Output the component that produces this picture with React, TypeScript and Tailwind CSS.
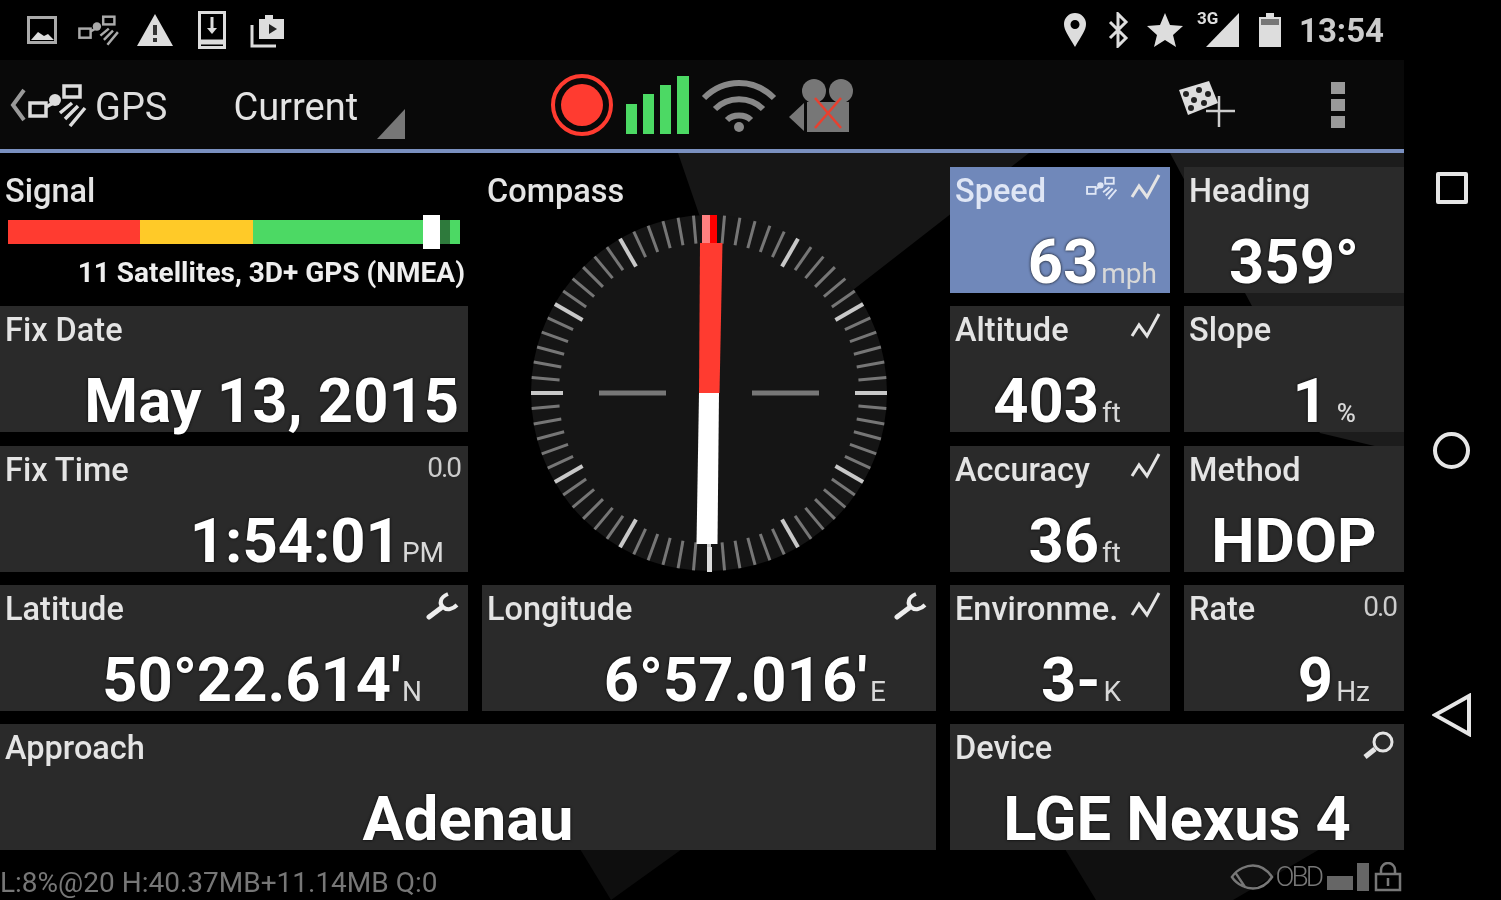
import React from "react";

// small icons used in the tiles and bars
function Satellite({ className }: { className?: string }) {
  return (
    <svg viewBox="0 0 60 44" className={className} fill="none" stroke="currentColor" strokeWidth="3.5">
      <rect x="2" y="20" width="16" height="13" />
      <path d="M18 24l9-5" />
      <circle cx="27" cy="17" r="6" fill="currentColor" stroke="none" />
      <rect x="36" y="3" width="16" height="11" />
      <path d="M42 43l15-18M37 36l13-13M32 30l12-10" />
    </svg>
  );
}

function Graph() {
  return (
    <svg viewBox="0 0 32 30" className="w-8 h-[30px]" fill="none" stroke="currentColor" strokeWidth="3">
      <path d="M2 24l7-11 8 11L29 2" />
    </svg>
  );
}

function WrenchIcon() {
  return (
    <svg viewBox="0 0 34 30" className="w-[34px] h-[30px] text-[#eee]" fill="none" stroke="currentColor">
      <path d="M3 26l12-9" strokeWidth="5" strokeLinecap="round" />
      <path d="M22 3C14 6 13 13 17 16c4 4 10 2 14-2" strokeWidth="4" />
    </svg>
  );
}

function Compass() {
  const ticks = Array.from({ length: 72 }, (_, i) => i * 5);
  return (
    <svg viewBox="0 0 380 380" className="w-[380px] h-[380px] shrink-0 self-center ml-[2px]">
      <circle cx="189" cy="193" r="178" fill="#151515" />
      {ticks.map((deg) => {
        const major = deg % 30 === 0;
        return (
          <line
            key={deg}
            x1="189"
            y1="15"
            x2="189"
            y2={major ? 47 : 43}
            stroke={major ? "#c8c8c8" : "#767676"}
            strokeWidth={major ? 4 : 3}
            transform={`rotate(${deg} 189 193)`}
          />
        );
      })}
      <path d="M79 193h67M232 193h67" stroke="#777" strokeWidth="5" />
      <path d="M182 15h15l0 28h-15z" fill="#ff8080" />
      <path d="M190 15h7l0 28h-7z" fill="#f00" />
      <path d="M180 43h22.500l-3 150h-20.500z" fill="#ff3b30" />
      <path d="M179 193h20l-1.500 151h-21z" fill="#fff" />
      <rect x="187" y="347" width="5" height="25" fill="#ddd" />
    </svg>
  );
}

type TileProps = {
  label: string;
  value?: string;
  unit?: string;
  unitClass?: string;
  rowClass?: string;
  className?: string;
  labelClass?: string;
  right?: React.ReactNode;
};

function Tile({ label, value, unit, unitClass, rowClass, className, labelClass, right }: TileProps) {
  return (
    <div className={`h-[126px] flex flex-col justify-between ${className ?? "bg-[#2a2a2a]"}`}>
      <div className="flex justify-between items-start pl-[5px] pr-[8px] h-[48px]">
        <span className={`text-[32.500px] font-medium leading-[48px] whitespace-nowrap ${labelClass ?? "text-[#e4e4e4]"}`}>{label}</span>
        <div className="flex items-center gap-3 text-[#e4e4e4] pt-[6px]">{right}</div>
      </div>
      <div className={`flex items-baseline h-[60px] ${rowClass}`}>
        <span className="text-[61.500px] leading-[58px] font-bold text-white [text-shadow:0_0_3px_#000]">{value}</span>
        {unit && <span className={`leading-none text-[#d8d8d8] ${unitClass ?? "text-[28px] ml-[3px]"}`}>{unit}</span>}
      </div>
    </div>
  );
}

export default function App() {
  return (
    <div className="flex w-[1501px] h-[900px] overflow-hidden bg-black font-['Roboto',sans-serif] blur-[0.7px]">
      <main className="relative w-[1404px] flex flex-col shrink-0">
        {/* android status bar */}
        <header className="h-[60px] flex items-center justify-between bg-black pl-[27px] pr-[20px]">
          <div className="flex items-center">
            <svg viewBox="0 0 30 28" className="w-[30px] h-[28px] text-[#aaa]" fill="none" stroke="currentColor" strokeWidth="3">
              <rect x="1.500" y="1.500" width="27" height="25" />
              <path d="M4 24l7-8 6 4 4-2 6 6z" fill="#ddd" stroke="none" />
            </svg>
            <Satellite className="w-[42px] h-[32px] ml-[21px] text-[#aaa]" />
            <svg viewBox="0 0 36 32" className="w-[36px] h-[32px] ml-[17px] text-[#ddd]" fill="currentColor">
              <path d="M18 0l18 32H0z" />
              <path d="M16 11h4v10h-4zM16 24h4v4h-4z" fill="#333" />
            </svg>
            <svg viewBox="0 0 28 38" className="w-[28px] h-[38px] ml-[25px] text-[#ddd]" fill="none" stroke="currentColor" strokeWidth="3">
              <rect x="1.500" y="1.500" width="25" height="35" />
              <path d="M1 31h26" strokeWidth="5" />
              <path d="M14 6v14" />
              <path d="M9 17h10l-5 6z" fill="currentColor" stroke="none" />
            </svg>
            <svg viewBox="0 0 36 36" className="w-[36px] h-[36px] ml-[24px] text-[#ddd]" fill="currentColor">
              <path d="M9 7h6V3h8v4h11v20H9z" />
              <path d="M19 12l8 5-8 5z" fill="#222" />
              <path d="M2 13v21h24" fill="none" stroke="currentColor" strokeWidth="3" />
            </svg>
          </div>
          <div className="flex items-center text-[#ddd]">
            <svg viewBox="0 0 24 36" className="w-[24px] h-[36px]" fill="currentColor">
              <path fillRule="evenodd" d="M12 35C5 23 1 18 1 12a11 11 0 0 1 22 0c0 6-4 11-11 23zM12 8a4.500 4.500 0 1 0 0 9 4.500 4.500 0 0 0 0-9z" />
            </svg>
            <svg viewBox="0 0 24 36" className="w-[24px] h-[36px] ml-[19px]" fill="none" stroke="currentColor" strokeWidth="3">
              <path d="M4 10l16 16-8 8V2l8 8L4 26" />
            </svg>
            <svg viewBox="0 0 36 34" className="w-[36px] h-[34px] ml-[17px]" fill="currentColor">
              <path d="M18 0l5 12 13 1-10 9 3 12-11-7-11 7 3-12L0 13l13-1z" />
            </svg>
            <div className="relative w-[44px] h-[34px] ml-[13px]">
              <svg viewBox="0 0 44 34" className="w-[44px] h-[34px]" fill="currentColor">
                <path d="M43 0v34H10z" />
              </svg>
              <span className="absolute left-[1px] -top-[3px] text-[17px] font-bold leading-none">3G</span>
            </div>
            <svg viewBox="0 0 22 34" className="w-[22px] h-[34px] ml-[19px]" fill="currentColor">
              <path d="M7 0h8v4h7v30H0V4h7z" />
              <path d="M2 6h18v6H2z" fill="#777" />
            </svg>
            <span className="ml-[18px] text-[33px] font-bold leading-none text-[#ccc]">13:54</span>
          </div>
        </header>

        {/* action bar */}
        <nav className="h-[89px] flex items-center bg-[#090909]">
          <svg viewBox="0 0 18 34" className="w-[18px] h-[34px] ml-[9px] text-[#999]" fill="none" stroke="currentColor" strokeWidth="4">
            <path d="M15 2L4 17l11 15" />
          </svg>
          <Satellite className="w-[60px] h-[44px] ml-[1px] text-[#ddd]" />
          <span className="ml-[7px] mt-[5px] text-[38px] text-[#ddd]">GPS</span>
          <span className="ml-[66px] mt-[5px] text-[38px] text-[#e4e4e4]">Current</span>
          <svg viewBox="0 0 28 30" className="w-[28px] h-[30px] ml-[19px] mt-[38px] text-[#777]" fill="currentColor">
            <path d="M28 0v30H0z" />
          </svg>
          <svg viewBox="0 0 64 64" className="w-[64px] h-[64px] ml-[145px]">
            <circle cx="32" cy="32" r="29" fill="none" stroke="#ff3b30" strokeWidth="4" />
            <circle cx="32" cy="32" r="21" fill="#ff3b30" />
          </svg>
          <div className="flex items-end gap-[6px] h-[58px] ml-[12px]">
            <div className="w-[11px] h-[30px] bg-[#4cd964]" />
            <div className="w-[11px] h-[40px] bg-[#4cd964]" />
            <div className="w-[11px] h-[49px] bg-[#4cd964]" />
            <div className="w-[12px] h-[58px] bg-[#4cd964]" />
          </div>
          <svg viewBox="0 0 76 54" className="w-[76px] h-[54px] ml-[12px] text-[#888]" fill="none" stroke="currentColor" strokeWidth="6">
            <path d="M3 20c20-20 50-20 70 0M14 31c13-13 35-13 48 0M26 42c6-6 18-6 24 0" />
            <circle cx="38" cy="49" r="5" fill="currentColor" stroke="none" />
          </svg>
          <svg viewBox="0 0 66 54" className="w-[66px] h-[54px] ml-[12px]">
            <circle cx="25" cy="13" r="12" fill="#777" />
            <circle cx="52" cy="13" r="12" fill="#777" />
            <rect x="18" y="24" width="42" height="30" fill="#777" />
            <path d="M0 39l15-14v28z" fill="#777" />
            <path d="M26 20l26 30M52 20L26 50" stroke="#e8402f" strokeWidth="2.500" />
          </svg>
          <svg viewBox="0 0 56 47" className="w-[56px] h-[47px] ml-[324px] text-[#ccc]">
            <path d="M0 9L30 0l9 22-30 12z" fill="#ddd" />
            <circle cx="7" cy="13" r="3" fill="#222" />
            <circle cx="20" cy="9" r="3" fill="#222" />
            <circle cx="15" cy="19" r="3" fill="#222" />
            <circle cx="29" cy="13" r="3" fill="#222" />
            <circle cx="12" cy="27" r="3" fill="#222" />
            <circle cx="25" cy="22" r="3" fill="#222" />
            <path d="M40 15v31M27 30h29" stroke="currentColor" strokeWidth="2.500" />
          </svg>
          <div className="flex flex-col gap-[5px] ml-[96px]">
            <div className="w-[14px] h-[12px] bg-[#999]" />
            <div className="w-[14px] h-[12px] bg-[#999]" />
            <div className="w-[14px] h-[12px] bg-[#999]" />
          </div>
        </nav>
        <div className="h-[4px] bg-[#7a90c0]" />

        {/* dashboard */}
        <section className="relative flex-1 flex flex-col bg-black">
          <svg viewBox="0 0 1404 747" className="absolute inset-0 w-[1404px] h-[747px]">
            <path d="M678 0H1029L853 137L709 240L700 64z" fill="#161616" />
            <path d="M1170 0H1404V300L1320 280z" fill="#1c1c1c" />
            <path d="M580 696H682L611 747z" fill="#0e0e0e" />
            <path d="M1065 696H1320L1233 747H1096z" fill="#101010" />
          </svg>
          <div className="relative grid grid-cols-[468px_454px_220px_220px] grid-rows-[repeat(5,126px)] gap-x-[14px] gap-y-[13.250px] mt-[14px]">
            <div className="h-[126px] flex flex-col">
              <span className="text-[32.500px] font-medium leading-[48px] h-[48px] pl-[5px] text-[#e4e4e4]">Signal</span>
              <div className="relative flex h-[24px] ml-[8px] mt-[5px] w-[452px]">
                <div className="w-[132px] bg-[#ff3b30]" />
                <div className="w-[113px] bg-[#ffca28]" />
                <div className="flex-1 bg-[#4cd964]" />
                <div className="absolute left-[432px] top-0 w-[10px] h-[24px] bg-[#2e7a3c]" />
                <div className="absolute left-[415px] -top-[5px] w-[17px] h-[34px] bg-white" />
              </div>
              <span className="text-[28px] font-bold text-[#eee] text-right whitespace-nowrap pr-[3px] mt-[11px] leading-[36px]">
                11 Satellites, 3D+ GPS (NMEA)
              </span>
            </div>
            <div className="row-span-3 flex flex-col">
              <span className="text-[32.500px] font-medium leading-[48px] h-[33px] pl-[5px] text-[#e4e4e4]">Compass</span>
              <Compass />
            </div>
            <Tile
              label="Speed"
              value="63"
              unit="mph"
              className="bg-[#7088ba]"
              labelClass="text-[#dfe6f5]"
              rowClass="justify-end pr-[13px]"
              right={
                <>
                  <Satellite className="w-[32px] h-[24px] text-[#dfe6f5]" />
                  <Graph />
                </>
              }
            />
            <Tile label="Heading" value="359°" rowClass="justify-center" />
            <Tile label="Fix Date" value="May 13, 2015" rowClass="justify-end pr-[9px]" />
            <Tile label="Altitude" value="403" unit="ft" rowClass="justify-end pr-[49px]" right={<Graph />} />
            <Tile label="Slope" value="1" unit="%" unitClass="text-[26px] font-medium ml-[9px]" rowClass="justify-end pr-[48px]" />
            <Tile
              label="Fix Time"
              value="1:54:01"
              unit="PM"
              unitClass="text-[28px] ml-[1px]"
              rowClass="justify-end pr-[24px]"
              right={<span className="text-[28px] leading-[32px] tracking-[-2px] text-[#ccc]">0.0</span>}
            />
            <Tile label="Accuracy" value="36" unit="ft" rowClass="justify-end pr-[49px]" right={<Graph />} />
            <Tile label="Method" value="HDOP" rowClass="justify-center" />
            <Tile label="Latitude" value="50°22.614'" unit="N" unitClass="text-[28px] ml-[1px]" rowClass="justify-end pr-[46px]" right={<WrenchIcon />} />
            <Tile label="Longitude" value="6°57.016'" unit="E" rowClass="justify-end pr-[50px]" right={<WrenchIcon />} />
            <Tile label="Environme." value="3-" unit="K" rowClass="justify-end pr-[49px]" right={<Graph />} />
            <Tile
              label="Rate"
              value="9"
              unit="Hz"
              rowClass="justify-end pr-[34px]"
              right={<span className="text-[28px] leading-[32px] tracking-[-2px] text-[#ccc]">0.0</span>}
            />
            <Tile label="Approach" value="Adenau" className="col-span-2 bg-[#2a2a2a]" rowClass="justify-center" />
            <Tile
              label="Device"
              value="LGE Nexus 4"
              className="col-span-2 bg-[#2a2a2a]"
              rowClass="justify-center"
              right={
                <svg viewBox="0 0 34 30" className="w-[34px] h-[30px]" fill="none" stroke="currentColor" strokeWidth="3">
                  <circle cx="21" cy="12" r="9" />
                  <path d="M13 19L3 27" strokeWidth="5" />
                </svg>
              }
            />
          </div>
          <footer className="relative flex-1 flex items-center justify-between pr-[2px] text-[#777] pt-[16px]">
            <span className="text-[28px] leading-[34px] whitespace-nowrap">L:8%@20 H:40.37MB+11.14MB Q:0</span>
            <div className="flex items-center gap-[2px] h-[32px] -mt-[12px]">
              <svg viewBox="0 0 46 28" className="w-[44px] h-[28px]" fill="none" stroke="currentColor" strokeWidth="2.500">
                <path d="M2 14C8 5 18 2 24 2s14 3 20 12c-6 9-14 12-20 12S8 23 2 14zM6 10l10 15" />
              </svg>
              <span className="text-[28px] leading-none tracking-[-3px] font-light mr-[4px]">OBD</span>
              <div className="w-[26px] h-[14px] bg-[#666] mt-[12px]" />
              <div className="w-[12px] h-[28px] bg-[#666] ml-[2px]" />
              <svg viewBox="0 0 28 30" className="w-[28px] h-[30px] ml-[3px]" fill="none" stroke="currentColor" strokeWidth="2.500">
                <rect x="2" y="12" width="24" height="16" />
                <path d="M7 12V8a7 7 0 0 1 14 0v4M14 16v8" />
              </svg>
            </div>
          </footer>
        </section>
      </main>

      {/* android nav keys */}
      <aside className="flex-1 bg-black flex flex-col items-center text-[#e6e6e6] pr-[2px]">
        <div className="w-[32px] h-[32px] mt-[172px] border-[4px] border-current rounded-[2px]" />
        <div className="w-[37px] h-[37px] mt-[228px] border-[4px] border-current rounded-full" />
        <svg viewBox="0 0 40 44" className="w-[40px] h-[44px] mt-[224px]" fill="none" stroke="currentColor" strokeWidth="4">
          <path d="M37 3v38L3 22z" />
        </svg>
      </aside>
    </div>
  );
}
